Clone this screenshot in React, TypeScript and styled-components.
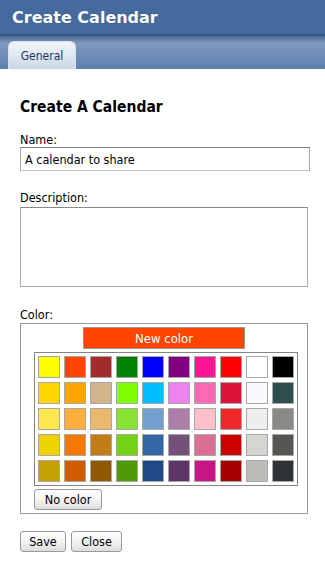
import React from 'react';
import styled, { createGlobalStyle } from 'styled-components';

const GlobalStyle = createGlobalStyle`
  body {
    margin: 0;
    background: #fff;
    font-family: "DejaVu Sans Condensed", "DejaVu Sans", Verdana, sans-serif;
    color: #000;
  }
`;

const SWATCHES = [
  ['#ffff00', '#ff4500', '#a52a2a', '#008000', '#0000ff', '#800080', '#ff1493', '#ff0000', '#ffffff', '#000000'],
  ['#ffd700', '#ffa500', '#d2b48c', '#7fff00', '#00bfff', '#ee82ee', '#ff69b4', '#dc143c', '#f8f8ff', '#2f4f4f'],
  ['#fce94f', '#fcaf3e', '#e9b96e', '#8ae234', '#729fcf', '#ad7fa8', '#ffc0cb', '#ef2929', '#eeeeec', '#888a85'],
  ['#edd400', '#f57900', '#c17d11', '#73d216', '#3465a4', '#75507b', '#db7093', '#cc0000', '#d3d7cf', '#555753'],
  ['#c4a000', '#ce5c00', '#8f5902', '#4e9a06', '#204a87', '#5c3566', '#c71585', '#a40000', '#babdb6', '#2e3436'],
];

const Page = styled.div`
  width: 325px;
  min-height: 564px;
`;

const Header = styled.div`
  height: 34px;
  background: #446a9e;
  display: flex;
  align-items: center;
  padding-left: 12px;
  box-sizing: border-box;
`;

const Title = styled.h1`
  margin: 0;
  font-family: "DejaVu Sans", Verdana, sans-serif;
  font-size: 16px;
  font-weight: bold;
  color: #fff;
  line-height: 20px;
  padding-top: 1px;
  text-shadow: 0 0 1px rgba(0, 0, 0, 0.3);
`;

const TabBar = styled.div`
  height: 35px;
  display: flex;
  align-items: flex-end;
  padding-left: 8px;
  box-sizing: border-box;
  background: linear-gradient(
    to bottom,
    #2d4a73 0px,
    #4d6d99 3px,
    #7f9abf 9px,
    #7391b9 18px,
    #5c80b0 35px
  );
`;

const Tab = styled.div`
  width: 68px;
  height: 28px;
  box-sizing: border-box;
  border: 1px solid #d8e1ec;
  border-bottom: none;
  border-radius: 6px 6px 0 0;
  background: linear-gradient(to bottom, #f3f6fa 0%, #dfe7f0 50%, #c9d6e5 100%);
  color: #1b3566;
  font-size: 12px;
  display: flex;
  align-items: center;
  justify-content: center;
  padding-top: 1px;
`;

const Content = styled.div`
  padding: 28px 15px 0 20px;
  display: flex;
  flex-direction: column;
  align-items: flex-start;
`;

const Heading = styled.h2`
  margin: 0;
  font-size: 15.5px;
  line-height: 20px;
  font-weight: bold;
`;

const Label = styled.label<{ gap: number }>`
  display: block;
  font-size: 12.5px;
  line-height: 15px;
  margin-top: ${({ gap }) => gap}px;
`;

const TextInput = styled.input`
  width: 290px;
  height: 24px;
  box-sizing: border-box;
  margin: 0;
  padding: 0 4px;
  border: 1px solid #a9a9a9;
  border-top-color: #7c7c7c;
  border-bottom-color: #c4c4c4;
  font-family: inherit;
  font-size: 12.5px;
  color: #000;
  outline: none;
`;

const TextArea = styled.textarea`
  width: 288px;
  height: 80px;
  box-sizing: border-box;
  margin: 2px 0 0;
  padding: 2px 4px;
  border: 1px solid #a9a9a9;
  border-top-color: #8a8a8a;
  resize: none;
  font-family: inherit;
  font-size: 12.5px;
  outline: none;
`;

const ColorBox = styled.div`
  width: 288px;
  margin-top: 1px;
  box-sizing: border-box;
  border: 1px solid #9a9a9a;
  padding: 3px 0;
  display: flex;
  flex-direction: column;
`;

const NewColor = styled.button`
  align-self: center;
  width: 162px;
  height: 22px;
  margin: 0;
  padding: 0;
  border: 1px solid #9a9a9a;
  background: #ff4500;
  color: #fff;
  font-family: inherit;
  font-size: 13px;
`;

const SwatchGrid = styled.div`
  margin: 3px 0 0 13px;
  width: 264px;
  box-sizing: border-box;
  border: 1px solid #858585;
  padding: 3px;
  display: grid;
  grid-template-columns: repeat(10, 22px);
  grid-auto-rows: 22px;
  gap: 4px;
`;

const Swatch = styled.div<{ color: string }>`
  box-sizing: border-box;
  border: 1px solid #a8a8a8;
  background: ${({ color }) => color};
`;

const PlainButton = styled.button<{ w: number }>`
  width: ${({ w }) => w}px;
  height: 21px;
  margin: 0;
  padding: 0;
  box-sizing: border-box;
  border: 1px solid #9a9a9a;
  border-radius: 3px;
  background: linear-gradient(to bottom, #ffffff 0%, #f4f4f4 50%, #dcdcdc 100%);
  font-family: inherit;
  font-size: 12.5px;
  color: #000;
`;

const NoColorButton = styled(PlainButton)`
  margin: 3px 0 0 13px;
`;

const Actions = styled.div`
  margin-top: 17px;
  display: flex;
  gap: 5px;
`;

export default function App() {
  return (
    <Page>
      <GlobalStyle />
      <Header>
        <Title>Create Calendar</Title>
      </Header>
      <TabBar>
        <Tab>General</Tab>
      </TabBar>
      <Content>
        <Heading>Create A Calendar</Heading>
        <Label gap={15}>Name:</Label>
        <TextInput defaultValue="A calendar to share" />
        <Label gap={19}>Description:</Label>
        <TextArea />
        <Label gap={20}>Color:</Label>
        <ColorBox>
          <NewColor>New color</NewColor>
          <SwatchGrid>
            {SWATCHES.flat().map((c, i) => (
              <Swatch key={i} color={c} />
            ))}
          </SwatchGrid>
          <NoColorButton w={68}>No color</NoColorButton>
        </ColorBox>
        <Actions>
          <PlainButton w={46}>Save</PlainButton>
          <PlainButton w={51}>Close</PlainButton>
        </Actions>
      </Content>
    </Page>
  );
}
